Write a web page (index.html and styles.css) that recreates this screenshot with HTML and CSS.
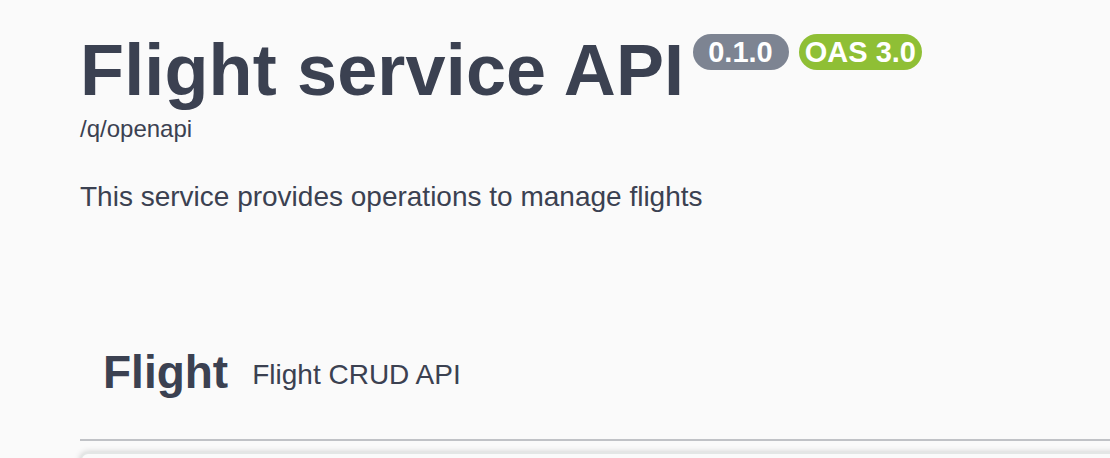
FILE: index.html
```html
<!DOCTYPE html>
<html lang="en">
<head>
<meta charset="utf-8">
<title>Flight service API</title>
<link rel="stylesheet" href="styles.css">
</head>
<body>
<div class="wrapper">
  <section class="info">
    <div class="title-row">
      <h2 class="title">Flight service API</h2>
      <span class="badge badge-version">0.1.0</span>
      <span class="badge badge-oas">OAS 3.0</span>
    </div>
    <a class="base-url">/q/openapi</a>
    <p class="description">This service provides operations to manage flights</p>
  </section>
  <section class="tag-section">
    <h3 class="opblock-tag">
      <span class="tag-name">Flight</span>
      <small class="tag-desc">Flight CRUD API</small>
    </h3>
    <div class="opblock"></div>
  </section>
</div>
</body>
</html>
```

FILE: styles.css
```css
html, body {
  margin: 0;
  padding: 0;
  background: #fafafa;
  overflow: hidden;
}
body {
  width: 1110px;
  height: 458px;
  font-family: "Liberation Sans", Arial, Helvetica, sans-serif;
  color: #3b4151;
}
.wrapper {
  padding: 29px 0 0 80px;
}
.info {
  display: flex;
  flex-direction: column;
  align-items: flex-start;
}
.title-row {
  display: flex;
  align-items: flex-start;
}
.title {
  margin: 0;
  font-size: 72px;
  line-height: 82px;
  font-weight: 700;
  letter-spacing: 0.15px;
  color: #3b4151;
}
.badge {
  margin: 5px 0 0 10px;
  height: 36px;
  line-height: 36px;
  border-radius: 18px;
  font-size: 29px;
  font-weight: 700;
  color: #fff;
  white-space: nowrap;
}
.badge-version {
  background: #7d8492;
  padding: 0 16px 0 15px;
  margin-left: 9px;
}
.badge-oas {
  background: #8fbf35;
  padding: 0 6px;
}
.base-url {
  margin-top: 4px;
  font-size: 24px;
  line-height: 28px;
  color: #3b4151;
}
.description {
  margin: 38px 0 0;
  font-size: 28px;
  line-height: 32px;
  color: #3b4151;
}
.tag-section {
  margin-top: 113px;
}
.opblock-tag {
  display: flex;
  align-items: center;
  margin: 0 0 11px;
  padding: 20px 40px 40px 23px;
  border-bottom: 2px solid rgba(59, 65, 81, 0.3);
}
.tag-name {
  font-size: 46px;
  line-height: 53px;
  font-weight: 700;
}
.tag-desc {
  font-size: 28px;
  line-height: 32px;
  font-weight: 400;
  padding-left: 24px;
  margin-top: 4px;
}
.opblock {
  height: 80px;
  margin-right: -20px;
  background: #fafafa;
  border: 2px solid #e3e6e5;
  border-radius: 8px;
  box-shadow: 0 0 6px rgba(0, 0, 0, 0.19);
}
```
